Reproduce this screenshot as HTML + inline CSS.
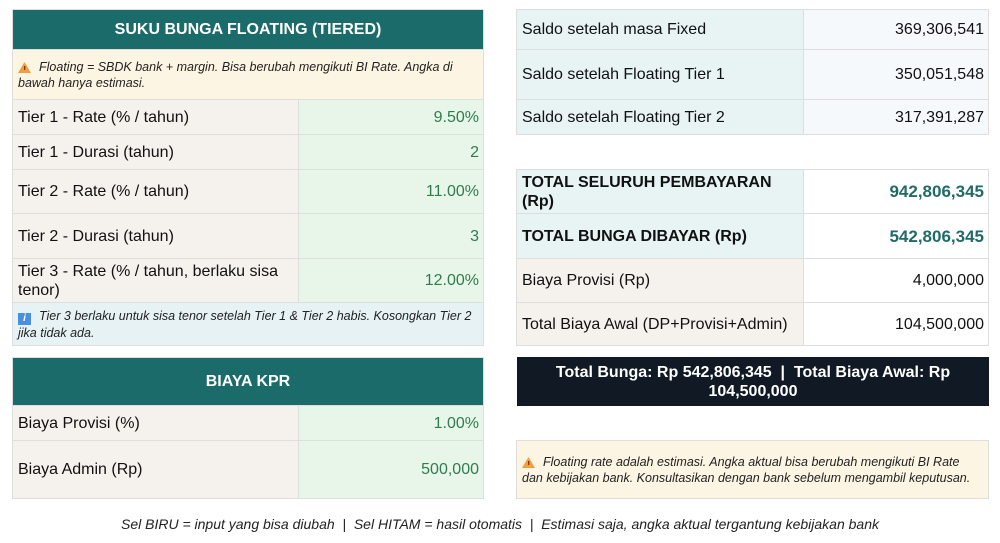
<!DOCTYPE html>
<html><head><meta charset="utf-8"><style>
*{margin:0;padding:0;box-sizing:border-box}
body{width:1000px;height:543px;background:#fff;font-family:"Liberation Sans",sans-serif;position:relative;overflow:hidden;color:#111}
.c{position:absolute;border:1px solid #dedede;display:flex;align-items:center;font-size:16px;padding:0 5px;line-height:19px}
.l{background:#f5f2ed}
.v{background:#e8f5e9;color:#2e7d4f;justify-content:flex-end;padding-right:4px}
.h{background:#1b6b6b;color:#fff;font-weight:bold;justify-content:center;font-size:16px}
.note{background:#fdf5e3;font-style:italic;font-size:12.5px;line-height:16px;color:#222}
.info{background:#e6f2f4;font-style:italic;font-size:12.5px;line-height:16px;color:#222}
.rl{background:#e8f3f3}
.rv{background:#f6f9fb;justify-content:flex-end;padding-right:4px}
.w{background:#fff;justify-content:flex-end;padding-right:4px}
.b{font-weight:bold}
.g{color:#1f6b66;font-weight:bold;font-size:17px}
.tri{display:inline-block;vertical-align:-2px;margin-right:8px}
</style></head><body>
<div class="c h" style="left:12px;top:9px;width:472px;height:41px">SUKU BUNGA FLOATING (TIERED)</div>
<div class="c note" style="left:12px;top:49px;width:472px;height:51px;display:block;padding-top:9px"><svg class="tri" width="13" height="11" viewBox="0 0 13 11"><path d="M6.5 0L13 11H0z" fill="#f0a040"/><rect x="6" y="4" width="1.3" height="4" fill="#7a3a00"/></svg>Floating = SBDK bank + margin. Bisa berubah mengikuti BI Rate. Angka di bawah hanya estimasi.</div>
<div class="c l" style="left:12px;top:99px;width:287px;height:36px">Tier 1 - Rate (% / tahun)</div>
<div class="c v" style="left:298px;top:99px;width:186px;height:36px">9.50%</div>
<div class="c l" style="left:12px;top:134px;width:287px;height:36px">Tier 1 - Durasi (tahun)</div>
<div class="c v" style="left:298px;top:134px;width:186px;height:36px">2</div>
<div class="c l" style="left:12px;top:169px;width:287px;height:45px">Tier 2 - Rate (% / tahun)</div>
<div class="c v" style="left:298px;top:169px;width:186px;height:45px">11.00%</div>
<div class="c l" style="left:12px;top:213px;width:287px;height:46px">Tier 2 - Durasi (tahun)</div>
<div class="c v" style="left:298px;top:213px;width:186px;height:46px">3</div>
<div class="c l" style="left:12px;top:258px;width:287px;height:45px">Tier 3 - Rate (% / tahun, berlaku sisa tenor)</div>
<div class="c v" style="left:298px;top:258px;width:186px;height:45px">12.00%</div>
<div class="c info" style="left:12px;top:302px;width:472px;height:44px;display:block;padding-top:5px"><span style="display:inline-block;width:13px;height:12px;background:#4a90e2;color:#fff;font-size:10px;text-align:center;line-height:12px;margin-right:8px;vertical-align:-1px;font-weight:bold">i</span>Tier 3 berlaku untuk sisa tenor setelah Tier 1 &amp; Tier 2 habis. Kosongkan Tier 2 jika tidak ada.</div>

<div class="c h" style="left:12px;top:357px;width:472px;height:49px">BIAYA KPR</div>
<div class="c l" style="left:12px;top:405px;width:287px;height:36px">Biaya Provisi (%)</div>
<div class="c v" style="left:298px;top:405px;width:186px;height:36px">1.00%</div>
<div class="c l" style="left:12px;top:440px;width:287px;height:59px">Biaya Admin (Rp)</div>
<div class="c v" style="left:298px;top:440px;width:186px;height:59px">500,000</div>

<div class="c rl" style="left:516px;top:9px;width:288px;height:41px">Saldo setelah masa Fixed</div>
<div class="c rv" style="left:803px;top:9px;width:186px;height:41px">369,306,541</div>
<div class="c rl" style="left:516px;top:49px;width:288px;height:51px">Saldo setelah Floating Tier 1</div>
<div class="c rv" style="left:803px;top:49px;width:186px;height:51px">350,051,548</div>
<div class="c rl" style="left:516px;top:99px;width:288px;height:36px">Saldo setelah Floating Tier 2</div>
<div class="c rv" style="left:803px;top:99px;width:186px;height:36px">317,391,287</div>

<div class="c rl b" style="left:516px;top:169px;width:288px;height:45px">TOTAL SELURUH PEMBAYARAN (Rp)</div>
<div class="c w g" style="left:803px;top:169px;width:186px;height:45px">942,806,345</div>
<div class="c rl b" style="left:516px;top:213px;width:288px;height:46px">TOTAL BUNGA DIBAYAR (Rp)</div>
<div class="c w g" style="left:803px;top:213px;width:186px;height:46px">542,806,345</div>
<div class="c l" style="left:516px;top:258px;width:288px;height:45px">Biaya Provisi (Rp)</div>
<div class="c w" style="left:803px;top:258px;width:186px;height:45px">4,000,000</div>
<div class="c l" style="left:516px;top:302px;width:288px;height:44px">Total Biaya Awal (DP+Provisi+Admin)</div>
<div class="c w" style="left:803px;top:302px;width:186px;height:44px">104,500,000</div>

<div class="c" style="left:517px;top:357px;width:472px;height:49px;background:#111a24;border:none;color:#fff;font-weight:bold;justify-content:center;text-align:center;padding:0 34px">Total Bunga: Rp 542,806,345 &nbsp;|&nbsp; Total Biaya Awal: Rp 104,500,000</div>

<div class="c note" style="left:516px;top:440px;width:473px;height:59px;display:block;padding-top:13px"><svg class="tri" width="13" height="11" viewBox="0 0 13 11"><path d="M6.5 0L13 11H0z" fill="#f0a040"/><rect x="6" y="4" width="1.3" height="4" fill="#7a3a00"/></svg>Floating rate adalah estimasi. Angka aktual bisa berubah mengikuti BI Rate dan kebijakan bank. Konsultasikan dengan bank sebelum mengambil keputusan.</div>

<div style="position:absolute;left:0;width:1000px;top:516px;text-align:center;font-size:14px;font-style:italic;color:#222">Sel BIRU = input yang bisa diubah &nbsp;|&nbsp; Sel HITAM = hasil otomatis &nbsp;|&nbsp; Estimasi saja, angka aktual tergantung kebijakan bank</div>
</body></html>
